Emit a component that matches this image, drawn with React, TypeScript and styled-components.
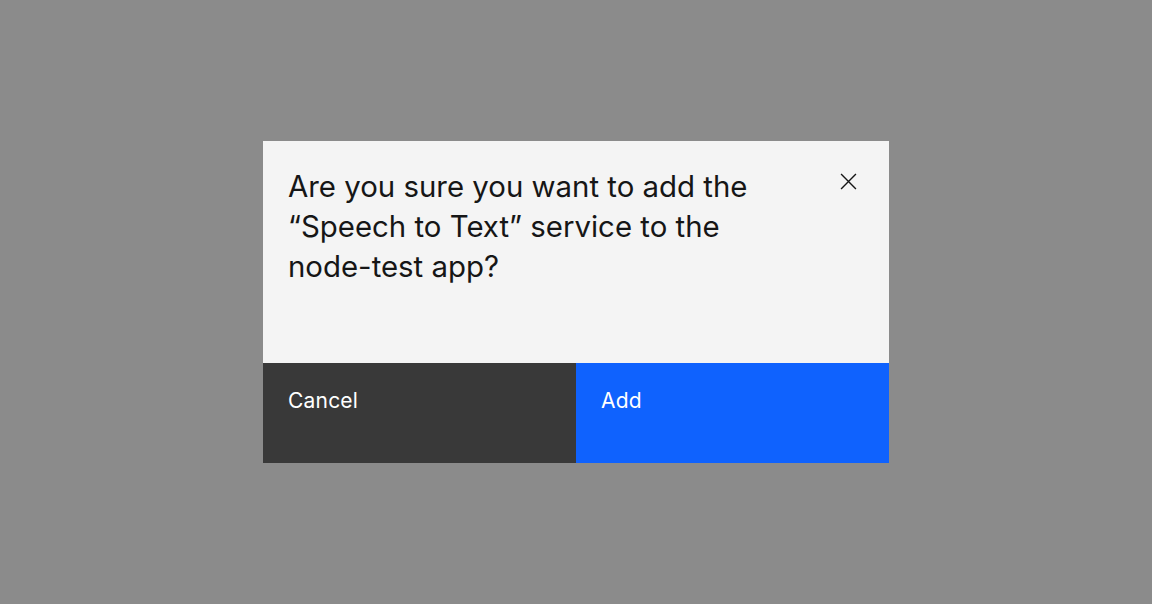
import styled, { createGlobalStyle } from 'styled-components'

const Global = createGlobalStyle`
  html, body {
    margin: 0;
    padding: 0;
    height: 100%;
  }
  body {
    background: #8b8b8b;
    font-family: Inter, "Noto Sans", "Liberation Sans", sans-serif;
  }
  #root {
    height: 100%;
  }
`

const Overlay = styled.div`
  height: 604px;
  display: flex;
  align-items: center;
  justify-content: center;
`

const Modal = styled.div`
  width: 626px;
  height: 322px;
  background: #f4f4f4;
  display: flex;
  flex-direction: column;
  margin-top: -1px;
`

const Body = styled.div`
  flex: 1;
  display: flex;
  justify-content: space-between;
  align-items: flex-start;
  padding: 26px 25px 0 25px;
`

const Heading = styled.h2`
  margin: 0;
  width: 500px;
  font-size: 29.4px;
  line-height: 40px;
  font-weight: 400;
  color: #161616;
`

const Close = styled.button`
  width: 40px;
  height: 40px;
  margin: -5px -4px 0 0;
  padding: 0;
  border: none;
  background: transparent;
  display: flex;
  align-items: center;
  justify-content: center;
  color: #161616;
  cursor: pointer;
`

const Footer = styled.div`
  height: 100px;
  display: grid;
  grid-template-columns: 1fr 1fr;
`

const Action = styled.button<{ $primary?: boolean }>`
  border: none;
  margin: 0;
  padding: 25px;
  text-align: left;
  display: flex;
  align-items: flex-start;
  font-family: inherit;
  font-size: 21px;
  line-height: 25px;
  letter-spacing: 0.2px;
  color: #ffffff;
  background: ${({ $primary }) => ($primary ? '#0f62fe' : '#393939')};
  cursor: pointer;
`

export default function App() {
  return (
    <>
      <Global />
      <Overlay>
        <Modal>
          <Body>
            <Heading>
              Are you sure you want to add the “Speech to Text” service to the node-test app?
            </Heading>
            <Close aria-label="Close">
              <svg width="17" height="17" viewBox="0 0 16 16" fill="none" stroke="currentColor" strokeWidth="1.3">
                <path d="M1 1 L15 15 M15 1 L1 15" />
              </svg>
            </Close>
          </Body>
          <Footer>
            <Action>Cancel</Action>
            <Action $primary>Add</Action>
          </Footer>
        </Modal>
      </Overlay>
    </>
  )
}
